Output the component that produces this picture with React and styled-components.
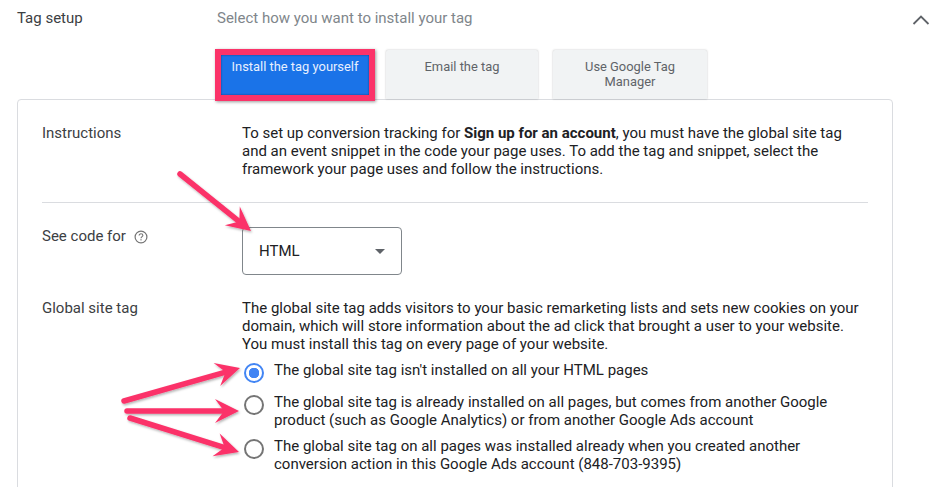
import React from "react";
import styled, { createGlobalStyle } from "styled-components";

const GlobalStyle = createGlobalStyle`
  html, body {
    margin: 0;
    padding: 0;
    background: #ffffff;
    overflow: hidden;
  }
  body {
    font-family: Roboto, "Liberation Sans", sans-serif;
    color: #202124;
  }
`;

function Chevron() {
  return (
    <ChevronWrap>
      <svg width='18' height='12' viewBox='0 0 18 12' fill='none'>
        <path d='M1.5 10L9 2.5L16.5 10' stroke='#5f6368' strokeWidth='1.8' />
      </svg>
    </ChevronWrap>
  );
}

function HelpIcon() {
  return (
    <svg width='14' height='14' viewBox='0 0 14 14' fill='none'>
      <circle cx='7' cy='7' r='5.9' stroke='#757575' strokeWidth='1.2' />
      <path
        d='M5.1 5.6C5.1 4.5 5.9 3.8 7 3.8C8.1 3.8 8.9 4.5 8.9 5.4C8.9 6.6 7 6.7 7 8.3'
        stroke='#757575'
        strokeWidth='1.1'
      />
      <rect x='6.4' y='9.2' width='1.2' height='1.2' fill='#757575' />
    </svg>
  );
}

function Arrow({ x1, y1, x2, y2 }) {
  // shaft with a swept head, the tip sits at x2,y2
  const angle = Math.atan2(y2 - y1, x2 - x1);
  const point = (back, side) => {
    const px = x2 - back * Math.cos(angle) - side * Math.sin(angle);
    const py = y2 - back * Math.sin(angle) + side * Math.cos(angle);
    return `${px},${py}`;
  };
  const neck = point(15, 0).split(",");
  return (
    <>
      <line
        x1={x1}
        y1={y1}
        x2={neck[0]}
        y2={neck[1]}
        stroke='#fb3369'
        strokeWidth='5.5'
        strokeLinecap='round'
      />
      <polygon
        points={`${x2},${y2} ${point(24, 12)} ${point(15, 0)} ${point(24, -12)}`}
        fill='#fb3369'
      />
    </>
  );
}

function App() {
  return (
    <Page>
      <GlobalStyle />
      <Header>
        <HeaderTitle>Tag setup</HeaderTitle>
        <HeaderHint>Select how you want to install your tag</HeaderHint>
        <Chevron />
      </Header>
      <Tabs>
        <SelectedTab>
          <SelectedTabInner>Install the tag yourself</SelectedTabInner>
        </SelectedTab>
        <Tab width='152px' gap='14px'>
          Email the tag
        </Tab>
        <Tab width='154px'>
          Use Google Tag
          <br />
          Manager
        </Tab>
      </Tabs>
      <Card>
        <Row>
          <Label>Instructions</Label>
          <Value>
            To set up conversion tracking for <b>Sign up for an account</b>, you
            must have the global site tag
            <br />
            and an event snippet in the code your page uses. To add the tag and
            snippet, select the
            <br />
            framework your page uses and follow the instructions.
          </Value>
        </Row>
        <Divider />
        <CodeRow>
          <Label>
            See code for
            <HelpWrap>
              <HelpIcon />
            </HelpWrap>
          </Label>
          <Select>
            HTML
            <Caret />
          </Select>
        </CodeRow>
        <SiteTagRow>
          <Label>Global site tag</Label>
          <Value>
            The global site tag adds visitors to your basic remarketing lists
            and sets new cookies on your
            <br />
            domain, which will store information about the ad click that brought
            a user to your website.
            <br />
            You must install this tag on every page of your website.
            <RadioList>
              <RadioRow>
                <Radio $checked />
                <span>The global site tag isn't installed on all your HTML pages</span>
              </RadioRow>
              <RadioRow>
                <Radio />
                <span>
                  The global site tag is already installed on all pages, but
                  comes from another Google
                  <br />
                  product (such as Google Analytics) or from another Google Ads
                  account
                </span>
              </RadioRow>
              <RadioRow>
                <Radio />
                <span>
                  The global site tag on all pages was installed already when
                  you created another
                  <br />
                  conversion action in this Google Ads account (848-703-9395)
                </span>
              </RadioRow>
            </RadioList>
          </Value>
        </SiteTagRow>
      </Card>
      <Annotations width='948' height='487' viewBox='0 0 948 487'>
        <defs>
          <filter id='arrowShadow' x='-20%' y='-20%' width='140%' height='140%'>
            <feDropShadow dx='1' dy='1.5' stdDeviation='1' floodColor='#000' floodOpacity='0.3' />
          </filter>
        </defs>
        <g filter='url(#arrowShadow)'>
          <Arrow x1={180} y1={174} x2={251} y2={231} />
          <Arrow x1={124} y1={401} x2={240} y2={368} />
          <Arrow x1={127} y1={411} x2={239} y2={411} />
          <Arrow x1={130} y1={418} x2={239} y2={452} />
        </g>
      </Annotations>
    </Page>
  );
}

const Page = styled.div`
  position: relative;
  width: 948px;
  height: 487px;
  overflow: hidden;
  box-sizing: border-box;
  padding: 9px 0 0 17px;
`;

const Header = styled.div`
  display: flex;
  align-items: center;
  width: 913px;
  height: 18px;
  font-size: 15px;
  line-height: 18px;
`;

const HeaderTitle = styled.div`
  width: 200px;
  color: #3c4043;
`;

const HeaderHint = styled.div`
  flex-grow: 1;
  color: #80868b;
`;

const ChevronWrap = styled.span`
  display: flex;
  padding-top: 4px;
`;

const Tabs = styled.div`
  display: flex;
  align-items: flex-end;
  height: 52px;
  margin: 22px 0 0 198px;
`;

const SelectedTab = styled.div`
  box-sizing: border-box;
  width: 160px;
  height: 52px;
  margin-right: 10px;
  border: 6px solid #fb3369;
  box-shadow: 1px 1px 3px rgba(0, 0, 0, 0.4);
`;

const SelectedTabInner = styled.div`
  box-sizing: border-box;
  height: 100%;
  padding-top: 4px;
  background: #1a73e8;
  box-shadow: inset 0 0 2px rgba(0, 0, 0, 0.5);
  color: #e8f0fe;
  font-size: 12.9px;
  line-height: 16px;
  text-align: center;
  white-space: nowrap;
`;

const Tab = styled.div`
  box-sizing: border-box;
  width: ${(props) => props.width};
  height: 49px;
  margin-right: ${(props) => props.gap || "0"};
  margin-bottom: 2px;
  margin-left: 1px;
  padding-top: 9px;
  border-radius: 2px 2px 0 0;
  background: #f1f3f4;
  box-shadow: 0 0 2px rgba(60, 64, 67, 0.35);
  color: #5f6368;
  font-size: 12.9px;
  line-height: 15px;
  text-align: center;
`;

const Card = styled.div`
  box-sizing: border-box;
  width: 876px;
  height: 420px;
  margin-top: -2px;
  padding: 24px 24px 0;
  border: 1px solid #dadce0;
  border-radius: 4px;
  font-size: 15px;
  line-height: 18px;
`;

const Row = styled.div`
  display: flex;
`;

const CodeRow = styled(Row)`
  margin-top: 24px;
`;

const SiteTagRow = styled(Row)`
  margin-top: 24px;
`;

const Label = styled.div`
  display: flex;
  align-items: flex-start;
  width: 200px;
  flex-shrink: 0;
  color: #3c4043;
`;

const HelpWrap = styled.span`
  display: flex;
  margin: 3px 0 0 8px;
`;

const Value = styled.div`
  color: #202124;
  white-space: nowrap;
`;

const Divider = styled.div`
  width: 826px;
  height: 1px;
  margin-top: 24px;
  background: #dadce0;
`;

const Select = styled.div`
  box-sizing: border-box;
  display: flex;
  align-items: center;
  justify-content: space-between;
  width: 160px;
  height: 48px;
  padding: 0 16px;
  border: 1px solid #80868b;
  border-radius: 4px;
  color: #202124;
`;

const Caret = styled.span`
  width: 0;
  height: 0;
  border-left: 5px solid transparent;
  border-right: 5px solid transparent;
  border-top: 5px solid #5f6368;
`;

const RadioList = styled.div`
  display: flex;
  flex-direction: column;
  gap: 8px;
  margin-top: 8px;
`;

const RadioRow = styled.div`
  display: flex;
  align-items: flex-start;
  gap: 10px;
  min-height: 24px;
  padding-left: 2px;
`;

const Radio = styled.span`
  box-sizing: border-box;
  width: 20px;
  height: 20px;
  margin-top: 2px;
  flex-shrink: 0;
  border: 2px solid ${(props) => (props.$checked ? "#4285f4" : "#757575")};
  border-radius: 50%;
  background: ${(props) =>
    props.$checked
      ? "radial-gradient(circle, #4285f4 0 5px, transparent 5.5px)"
      : "none"};
`;

const Annotations = styled.svg`
  position: absolute;
  top: 0;
  left: 0;
  pointer-events: none;
`;

export default App;
